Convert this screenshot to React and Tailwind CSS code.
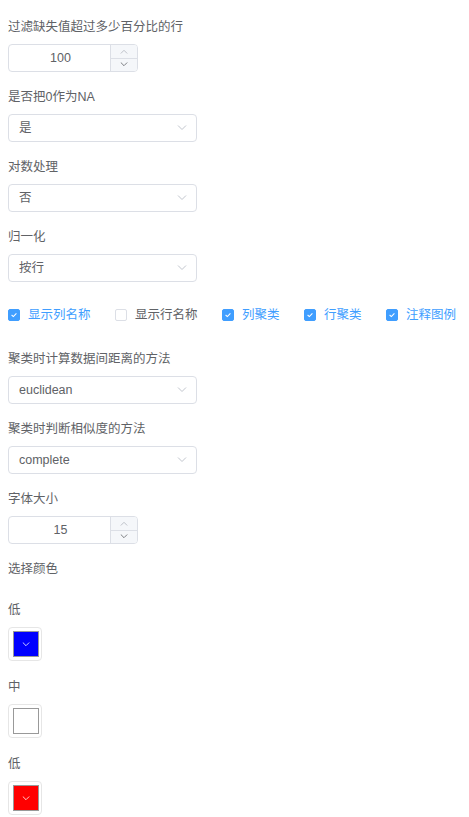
import React, { useState } from "react";

const Chevron = ({ up = false, className = "" }) => (
  <svg
    viewBox="0 0 10 6"
    className={className}
    fill="none"
    stroke="currentColor"
    strokeWidth="1"
  >
    {up ? <path d="M1 5.5 L5 1.5 L9 5.5" /> : <path d="M1 0.5 L5 4.5 L9 0.5" />}
  </svg>
);

const Label = ({ children }) => (
  <div className="h-[20px] leading-[22px] text-[12.5px] text-[#606266]">{children}</div>
);

const NumberInput = ({ value }) => (
  <div className="flex w-[130px] h-[28px] border border-[#dcdfe6] rounded-[4px] bg-white overflow-hidden">
    <div className="flex-1 flex items-center justify-center text-[12.5px] text-[#606266] pl-[2px]">
      {value}
    </div>
    <div className="w-[27px] flex flex-col border-l border-[#dcdfe6] bg-[#f5f7fa]">
      <div className="flex-1 flex items-center justify-center border-b border-[#dcdfe6] text-[#b0b4bc]">
        <Chevron up className="w-[8px] h-[5px]" />
      </div>
      <div className="flex-1 flex items-center justify-center text-[#606266]">
        <Chevron className="w-[8px] h-[5px]" />
      </div>
    </div>
  </div>
);

const Select = ({ value }) => (
  <div className="flex items-center justify-between w-[189px] h-[28px] border border-[#dcdfe6] rounded-[4px] bg-white pl-[10px] pr-[9px]">
    <span className="text-[12.5px] text-[#606266]">{value}</span>
    <Chevron className="w-[10px] h-[6px] text-[#c0c4cc]" />
  </div>
);

const Field = ({ label, children }) => (
  <div className="mb-[14px]">
    <Label>{label}</Label>
    <div className="mt-[8px]">{children}</div>
  </div>
);

const Checkbox = ({ label, checked }) => (
  <label className="flex items-center gap-[8px] cursor-pointer">
    <span
      className={
        checked
          ? "w-[12px] h-[12px] rounded-[2px] bg-[#409eff] border border-[#409eff] flex items-center justify-center"
          : "w-[12px] h-[12px] rounded-[2px] bg-white border border-[#dcdfe6]"
      }
    >
      {checked && (
        <svg viewBox="0 0 10 10" className="w-[8px] h-[8px]" fill="none" stroke="white" strokeWidth="1.3">
          <path d="M2 5 L4.2 7 L8 3" />
        </svg>
      )}
    </span>
    <span className={checked ? "text-[12.5px] text-[#409eff]" : "text-[12.5px] text-[#606266]"}>
      {label}
    </span>
  </label>
);

const ColorBox = ({ color, chevron = true }) => (
  <div className="w-[34px] h-[34px] border border-[#e6e6e6] rounded-[4px] pl-[4px] pt-[3px] bg-white">
    <div
      className="w-[26px] h-[26px] border border-[#999] flex items-center justify-center"
      style={{ backgroundColor: color }}
    >
      {chevron && <Chevron className="w-[8px] h-[5px] text-white" />}
    </div>
  </div>
);

export default function App() {
  const [checks] = useState([
    { label: "显示列名称", checked: true },
    { label: "显示行名称", checked: false },
    { label: "列聚类", checked: true },
    { label: "行聚类", checked: true },
    { label: "注释图例", checked: true },
  ]);

  return (
    <div
      className="min-h-screen bg-white pl-[8px] pt-[16px]"
      style={{ fontFamily: '"Liberation Sans", "Noto Sans CJK SC", sans-serif' }}
    >
      <Field label="过滤缺失值超过多少百分比的行">
        <NumberInput value="100" />
      </Field>
      <Field label="是否把0作为NA">
        <Select value="是" />
      </Field>
      <Field label="对数处理">
        <Select value="否" />
      </Field>
      <Field label="归一化">
        <Select value="按行" />
      </Field>

      <div className="h-[38px] flex items-center gap-[24.5px] mb-[14px]">
        {checks.map((c) => (
          <Checkbox key={c.label} label={c.label} checked={c.checked} />
        ))}
      </div>

      <Field label="聚类时计算数据间距离的方法">
        <Select value="euclidean" />
      </Field>
      <Field label="聚类时判断相似度的方法">
        <Select value="complete" />
      </Field>
      <Field label="字体大小">
        <NumberInput value="15" />
      </Field>

      <div className="mb-[21px]">
        <Label>选择颜色</Label>
      </div>

      <div className="mb-[15px]">
        <Label>低</Label>
        <div className="mt-[8px]">
          <ColorBox color="#0000ff" />
        </div>
      </div>
      <div className="mb-[15px]">
        <Label>中</Label>
        <div className="mt-[8px]">
          <ColorBox color="#ffffff" chevron={false} />
        </div>
      </div>
      <div>
        <Label>低</Label>
        <div className="mt-[8px]">
          <ColorBox color="#ff0000" />
        </div>
      </div>
    </div>
  );
}
